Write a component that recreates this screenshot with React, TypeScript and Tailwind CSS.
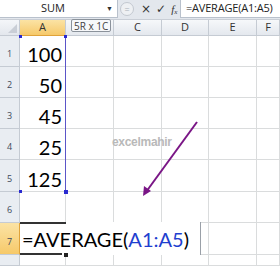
import React from "react";

const cols = [
  { name: "A", w: "w-[46px]" },
  { name: "B", w: "w-[48px]" },
  { name: "C", w: "w-[48px]" },
  { name: "D", w: "w-[47px]" },
  { name: "E", w: "w-[48px]" },
  { name: "F", w: "w-[23px]" },
];

const rows = [
  { n: "1", h: "h-[31px]", v: "100" },
  { n: "2", h: "h-[31px]", v: "50" },
  { n: "3", h: "h-[31px]", v: "45" },
  { n: "4", h: "h-[31px]", v: "25" },
  { n: "5", h: "h-[32px]", v: "125" },
  { n: "6", h: "h-[31px]", v: "" },
  { n: "7", h: "h-[32px]", v: "" },
  { n: "", h: "h-[11px]", v: "" },
];

function FormulaBar() {
  return (
    <div className="flex h-[20px] bg-[#e3e7ed] border-b border-[#c9ced6]">
      <div className="relative w-[118px] h-[18px] bg-white border-r border-b border-[#b9c1cc] flex items-center">
        <span className="w-[106px] text-center text-[11px] text-[#222] font-['Open_Sans',sans-serif]">SUM</span>
        <span className="text-[7px] text-[#333] leading-none">▼</span>
      </div>
      <div className="w-[62px] h-[18px] flex items-center">
        <div className="ml-[2px] w-[14px] h-[14px] rounded-full border border-[#c3c8d0] bg-[#eef0f3] flex items-center justify-center">
          <span className="text-[9px] leading-none text-[#aab0b8]">=</span>
        </div>
        <span className="ml-[7px] text-[12px] leading-none text-[#333] font-['DejaVu_Sans',sans-serif]">×</span>
        <span className="ml-[5px] text-[12px] leading-none text-[#333] font-['DejaVu_Sans',sans-serif]">✓</span>
        <span className="ml-[5px] text-[11px] leading-none italic text-[#333] font-['Liberation_Serif',serif]">
          f<sub className="text-[7px]">x</sub>
        </span>
      </div>
      <div className="flex-1 h-[18px] bg-white border-l border-b border-[#b9c1cc] flex items-center pl-[5px]">
        <span className="text-[11px] text-[#222] font-['Open_Sans',sans-serif] tracking-[-0.2px]">=AVERAGE(A1:A5)</span>
      </div>
    </div>
  );
}

function HeaderRow() {
  return (
    <div className="flex h-[16px]">
      <div className="relative w-[20px] bg-gradient-to-b from-[#f4f6f9] to-[#e3e7ed] border-r border-b border-[#c5cbd3]">
        <div className="absolute right-[2px] bottom-[2px] w-0 h-0 border-l-[9px] border-l-transparent border-b-[9px] border-b-[#c9ced6]" />
      </div>
      {cols.map((c) => (
        <div
          key={c.name}
          className={`${c.w} flex items-center justify-center text-[11px] text-[#333] font-['Open_Sans',sans-serif] border-r border-b ${
            c.name === "A"
              ? "bg-gradient-to-b from-[#fbe3a4] to-[#f6c969] border-r-[#c5cbd3] border-b-[#e0a33a]"
              : "bg-gradient-to-b from-[#f6f8fa] to-[#e4e8ee] border-[#c5cbd3]"
          }`}
        >
          {c.name === "B" ? "" : c.name}
        </div>
      ))}
    </div>
  );
}

export default function App() {
  return (
    <div className="relative w-[280px] h-[266px] overflow-hidden bg-white">
      <FormulaBar />
      <HeaderRow />
      {rows.map((r, ri) => (
        <div key={ri} className={`flex ${r.h}`}>
          <div
            className={`w-[20px] flex items-end justify-center pb-[6px] text-[9px] text-[#3f4a5a] font-['Open_Sans',sans-serif] border-r border-b ${
              r.n === "7"
                ? "bg-gradient-to-b from-[#fbe3a4] to-[#f6c969] border-r-[#e0a33a] border-b-[#c5cbd3]"
                : "bg-[#e9edf2] border-[#c5cbd3]"
            }`}
          >
            {r.n}
          </div>
          {cols.map((c, i) => (
            <div
              key={c.name}
              className={`relative ${c.w} border-r border-b border-[#dadcdd] ${i === 0 ? "flex items-end justify-end pr-[3px] pb-[2px]" : ""}`}
            >
              {i === 0 && r.v && (
                <span className="text-[20px] leading-none text-black font-['Lato',sans-serif]">{r.v}</span>
              )}
              {i === 0 && r.n === "7" && (
                <div className="absolute left-0 top-[-1px] z-10 w-[181px] h-[33px] bg-white border-r border-[#9aa0a8] flex items-center">
                  <div className="absolute left-0 top-0 w-[46px] h-[2px] bg-[#333]" />
                  <div className="absolute left-0 bottom-0 w-[42px] h-[2px] bg-[#333]" />
                  <div className="absolute left-[44px] bottom-[-2px] w-[4px] h-[4px] bg-[#222]" />
                  <span className="pl-[2px] text-[20px] leading-none whitespace-nowrap text-black font-['Lato',sans-serif]">
                    =AVERAGE(<span className="text-[#1f3fcf]">A1:A5</span>)
                  </span>
                </div>
              )}
            </div>
          ))}
        </div>
      ))}

      {/* range outline A1:A5 */}
      <div className="absolute left-[20px] top-[36px] w-[46px] h-[156px] border-r border-[#5b55c8]" />
      <div className="absolute left-[19px] top-[35px] w-[3px] h-[3px] bg-[#2a2ad0]" />
      <div className="absolute left-[64px] top-[35px] w-[3px] h-[3px] bg-[#2a2ad0]" />
      <div className="absolute left-[19px] top-[190px] w-[3px] h-[3px] bg-[#2a2ad0]" />
      <div className="absolute left-[64px] top-[190px] w-[4px] h-[4px] bg-[#2a2ad0]" />

      {/* selection size tooltip */}
      <div className="absolute left-[71px] top-[19px] h-[13px] px-[2px] flex items-center bg-[#f7f8fa] border border-[#8b929b] rounded-[2px] text-[10px] leading-none text-[#444] font-['Open_Sans',sans-serif]">
        5R x 1C
      </div>

      {/* watermark */}
      <div className="absolute left-[112px] top-[133px] text-[12px] font-bold text-[#b9b9b9] tracking-[-0.3px] font-['Liberation_Sans',sans-serif]">
        excelmahir
      </div>

      {/* arrow */}
      <svg className="absolute left-0 top-0" width="280" height="266" viewBox="0 0 280 266">
        <line x1="197" y1="122" x2="146" y2="192" stroke="#7a1686" strokeWidth="2" />
        <path d="M143 196 L144 186 L151 191 Z" fill="#7a1686" />
      </svg>
    </div>
  );
}
